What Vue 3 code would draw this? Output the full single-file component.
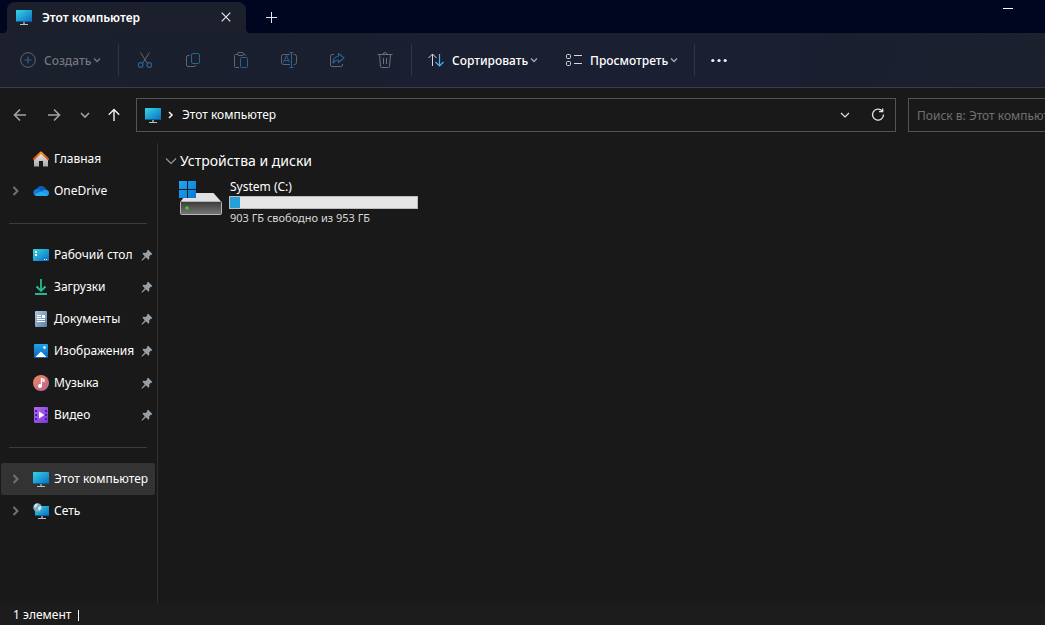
<script setup>
import { ref } from 'vue'

const search = ref('')

const actions = [
  { id: 'cut', label: 'Вырезать' },
  { id: 'copy', label: 'Копировать' },
  { id: 'paste', label: 'Вставить' },
  { id: 'rename', label: 'Переименовать' },
  { id: 'share', label: 'Поделиться' },
  { id: 'trash', label: 'Удалить' }
]

const groups = [
  [
    { icon: 'home', label: 'Главная' },
    { icon: 'cloud', label: 'OneDrive', expandable: true }
  ],
  [
    { icon: 'desktop', label: 'Рабочий стол', pinned: true },
    { icon: 'downloads', label: 'Загрузки', pinned: true },
    { icon: 'documents', label: 'Документы', pinned: true },
    { icon: 'pictures', label: 'Изображения', pinned: true },
    { icon: 'music', label: 'Музыка', pinned: true },
    { icon: 'video', label: 'Видео', pinned: true }
  ],
  [
    { icon: 'pc', label: 'Этот компьютер', expandable: true, selected: true },
    { icon: 'network', label: 'Сеть', expandable: true }
  ]
]

const drive = { name: 'System (C:)', free: 903, total: 953 }
const usedShare = ((drive.total - drive.free) / drive.total) * 100
</script>

<template>
  <div class="explorer">
    <svg class="defs" width="0" height="0" aria-hidden="true">
      <defs>
        <linearGradient id="gScreen" x1="0" y1="0" x2="1" y2="1">
          <stop offset="0" stop-color="#35d6e4" /><stop offset="1" stop-color="#0a6cc4" />
        </linearGradient>
        <linearGradient id="gRoof" x1="0" y1="0" x2="0" y2="1">
          <stop offset="0" stop-color="#fb9a1c" /><stop offset="1" stop-color="#d9490c" />
        </linearGradient>
        <linearGradient id="gWall" x1="0" y1="0" x2="0" y2="1">
          <stop offset="0" stop-color="#efefef" /><stop offset="1" stop-color="#a8a8a8" />
        </linearGradient>
        <linearGradient id="gDown" x1="0" y1="0" x2="0" y2="1">
          <stop offset="0" stop-color="#2fd08c" /><stop offset="1" stop-color="#14a39a" />
        </linearGradient>
        <linearGradient id="gDoc" x1="0" y1="0" x2="1" y2="1">
          <stop offset="0" stop-color="#b3c6dc" /><stop offset="1" stop-color="#5c7da3" />
        </linearGradient>
        <linearGradient id="gPic" x1="0" y1="0" x2="0" y2="1">
          <stop offset="0" stop-color="#1fa4e8" /><stop offset="1" stop-color="#0a62bd" />
        </linearGradient>
        <linearGradient id="gMusic" x1="0" y1="0" x2="1" y2="1">
          <stop offset="0" stop-color="#f08a5c" /><stop offset="1" stop-color="#b4619a" />
        </linearGradient>
        <linearGradient id="gVideo" x1="0" y1="0" x2="1" y2="1">
          <stop offset="0" stop-color="#b46cf5" /><stop offset="1" stop-color="#7a35d8" />
        </linearGradient>
        <linearGradient id="gDisk" x1="0" y1="0" x2="0" y2="1">
          <stop offset="0" stop-color="#3a3a3a" /><stop offset="1" stop-color="#777777" />
        </linearGradient>
        <linearGradient id="gWin" x1="0" y1="0" x2="1" y2="1">
          <stop offset="0" stop-color="#22a8ee" /><stop offset="1" stop-color="#0878d4" />
        </linearGradient>
      </defs>

      <symbol id="pc" viewBox="0 0 16 16">
        <rect x="0" y="1" width="16" height="12" rx=".5" fill="url(#gScreen)" />
        <path d="M0 12.500h16" stroke="#0c5f9c" />
        <path d="M7 13h2v2H7z" fill="#7f8c96" /><path d="M4 15h8v1H4z" fill="#b8c0c6" />
      </symbol>
      <symbol id="home" viewBox="0 0 16 16">
        <path d="M1 7.200 8 1l7 6.200V15.500H10V10H6v5.500H1z" fill="url(#gWall)" />
        <path d="M.9 8.100 8 1.400l7.100 6.700" fill="none" stroke="url(#gRoof)" stroke-width="2" stroke-linecap="round" stroke-linejoin="round" />
      </symbol>
      <symbol id="cloud" viewBox="0 0 16 16">
        <path d="M3 7.500C3.600 4.700 5.800 3 8.200 3c2.300 0 4.200 1.300 4.900 3.600L9 9z" fill="#0b5fb8" />
        <path d="M4 13a4 3.600 0 0 1-1-7c1.500-.3 2.800.1 4 .9l5 5.600z" fill="#1179d4" />
        <path d="M3 12.500 11 7a3.600 3.600 0 0 1 1.500-.3A3.200 3.200 0 0 1 16 10a3 3 0 0 1-3 3H4z" fill="#1c98e8" />
        <path d="M1.200 11.600 8 8.600l7 2.800c-.5 1-1.200 1.600-2.200 1.600H4c-1.300 0-2.200-.4-2.800-1.400z" fill="#28a8f0" />
      </symbol>
      <symbol id="desktop" viewBox="0 0 16 16">
        <rect x="0" y="2" width="16" height="12" rx="1" fill="url(#gScreen)" />
        <path d="M2 4h2v2H2zM2 7h2v2H2z" fill="#fff" />
        <path d="M11 12.500h1M13 12.500h1" stroke="#fff" />
      </symbol>
      <symbol id="downloads" viewBox="0 0 16 16">
        <path d="M3.500 7.500 8 12l4.500-4.500" fill="none" stroke="url(#gDown)" stroke-width="1.800" />
        <path d="M8 0v12" stroke="#26bd92" stroke-width="1.800" /><path d="M2 15h12" stroke="#22b890" stroke-width="2" />
      </symbol>
      <symbol id="documents" viewBox="0 0 16 16">
        <rect x="2" y="0" width="12" height="16" rx="1" fill="url(#gDoc)" />
        <path d="M4 4.500h4M4 6.500h4M4 8.500h8M4 10.500h8" stroke="#fff" />
        <path d="M9 4h3v3H9z" fill="#fff" />
      </symbol>
      <symbol id="pictures" viewBox="0 0 16 16">
        <rect x="1" y="1" width="14" height="14" rx="1" fill="url(#gPic)" />
        <path d="m2.500 14 5-5q.5-.5 1 0l5 5z" fill="#fff" /><circle cx="11.500" cy="4.500" r="1.300" fill="#fff" />
      </symbol>
      <symbol id="music" viewBox="0 0 16 16">
        <circle cx="8" cy="8" r="8" fill="url(#gMusic)" />
        <circle cx="7" cy="11" r="2" fill="#fff" /><path d="M8.400 11V3.500l2.600 1v2l-2-.7" fill="none" stroke="#fff" stroke-width="1.200" />
      </symbol>
      <symbol id="video" viewBox="0 0 16 16">
        <rect x="1" y="0" width="14" height="16" rx="1" fill="url(#gVideo)" />
        <path d="M2 3h2v2H2zM2 7h2v2H2zM2 11h2v2H2zM12 3h2v2h-2zM12 7h2v2h-2zM12 11h2v2h-2z" fill="#4b1f96" />
        <path d="m6 4.500 5.500 3.500L6 11.500z" fill="#fff" />
      </symbol>
      <symbol id="network" viewBox="0 0 16 16">
        <rect x="2" y="3" width="14" height="10" fill="url(#gScreen)" />
        <path d="M2 12.500h14" stroke="#0c5f9c" />
        <path d="M8 13h2v2H8z" fill="#7f8c96" /><path d="M5 15h8v1H5z" fill="#b8c0c6" />
        <circle cx="4.500" cy="4.500" r="4.300" fill="#7faac5" />
        <path d="M1 3q2-3 4-2.300L4 3 2 5zM5 4l3-1 .5 2-2 3-1.500-2z" fill="#d5e6ef" />
      </symbol>
      <symbol id="pin" viewBox="0 0 12 12">
        <path d="M7 .6 11.400 5l-.9.8-.7-.1-1.600 1.700.1 2.300-1 1L4.900 8.300 1.500 11.500H.7v-.8L3.800 7.200 1.400 4.800l1-1 2.300.1 1.600-1.600-.1-.7z" fill="#969fa5" />
      </symbol>

      <symbol id="cut" viewBox="0 0 16 16">
        <path d="M3.500 .5 10.500 11.500M12.500 .5 5.500 11.500" fill="none" stroke="#61656e" />
        <circle cx="3.700" cy="13" r="2.300" fill="none" stroke="#27638c" stroke-width="1.200" /><circle cx="12.300" cy="13" r="2.300" fill="none" stroke="#27638c" stroke-width="1.200" />
      </symbol>
      <symbol id="copy" viewBox="0 0 16 16">
        <path d="M4.500 3.500H3A1.500 1.500 0 0 0 1.500 5v8A1.500 1.500 0 0 0 3 14.500h6q1.500 0 1.500-1.500" fill="none" stroke="#61656e" />
        <rect x="6.500" y="1.500" width="8" height="10" rx="1.500" fill="none" stroke="#27638c" />
      </symbol>
      <symbol id="paste" viewBox="0 0 16 16">
        <path d="M5 2.500H2.500q-1 0-1 1v11q0 1 1 1H6M10 2.500h1.500q1 0 1 1V4" fill="none" stroke="#61656e" />
        <rect x="4.500" y=".5" width="6" height="3" rx="1.500" fill="none" stroke="#61656e" />
        <rect x="7.500" y="5.500" width="7" height="10" rx="1" fill="none" stroke="#27638c" />
      </symbol>
      <symbol id="rename" viewBox="0 0 16 16">
        <path d="M9 2.500H2.500q-2 0-2 2v6q0 2 2 2H9M12.500 2.500h1q2 0 2 2v6q0 2-2 2h-1" fill="none" stroke="#61656e" />
        <path d="m2.500 10.500 3-7 3 7M3.500 8.500h4M10.500 .5v15M8.500 .5h4M8.500 15.500h4" fill="none" stroke="#27638c" />
      </symbol>
      <symbol id="share" viewBox="0 0 16 16">
        <path d="M5 2.500H3Q1.500 2.500 1.500 4v9q0 1.500 1.500 1.500h9q1.500 0 1.500-1.500v-1" fill="none" stroke="#61656e" />
        <path d="M9.500 1.500 15 6l-5.500 4.500V8Q6.500 8 4 11q0-6 5.500-7z" fill="none" stroke="#27638c" stroke-width="1.200" stroke-linejoin="round" />
      </symbol>
      <symbol id="trash" viewBox="0 0 16 16">
        <path d="M.5 2.500h15M2.500 2.500l1 12q0 1 1 1h7q1 0 1-1l1-12M6.500 6v6M9.500 6v6M6 2.500q0-2 2-2t2 2" fill="none" stroke="#6c7079" />
      </symbol>
      <symbol id="chev" viewBox="0 0 10 10"><path d="m2 3.500 3 3 3-3" fill="none" stroke="currentColor" stroke-width="1.400" /></symbol>
      <symbol id="chevR" viewBox="0 0 10 10"><path d="M3.500 1 7.500 5l-4 4" fill="none" stroke="currentColor" stroke-width="2" /></symbol>
    </svg>

    <header class="titlebar">
      <div class="tab">
        <svg class="i16"><use href="#pc" /></svg>
        <span class="tab-title">Этот компьютер</span>
        <button class="tab-close" aria-label="Закрыть вкладку">
          <svg width="10" height="10" viewBox="0 0 10 10"><path d="m.7.7 8.600 8.600M9.300.7.7 9.300" stroke="#e8e8ea" stroke-width="1.200" /></svg>
        </button>
      </div>
      <button class="new-tab" aria-label="Новая вкладка">
        <svg width="11" height="11" viewBox="0 0 11 11"><path d="M5.500 0v11M0 5.500h11" stroke="#e8e8ee" /></svg>
      </button>
      <button class="minimize" aria-label="Свернуть">
        <svg width="10" height="1" viewBox="0 0 10 1"><path d="M0 .5h10" stroke="#fff" /></svg>
      </button>
    </header>

    <div class="toolbar">
      <button class="cmd create" disabled>
        <svg class="i16" viewBox="0 0 16 16"><circle cx="8" cy="8" r="7.300" fill="none" stroke="#61656e" /><path d="M8 4.500v7M4.500 8h7" stroke="#27638c" stroke-width="1.200" /></svg>
        <span>Создать</span>
        <svg class="i10"><use href="#chev" /></svg>
      </button>
      <span class="sep"></span>
      <div class="actions">
        <button v-for="a in actions" :key="a.id" class="tool" :aria-label="a.label" disabled>
          <svg class="i16"><use :href="'#' + a.id" /></svg>
        </button>
      </div>
      <span class="sep"></span>
      <button class="cmd sort">
        <svg class="i16" viewBox="0 0 16 16"><path d="M4.500 14V2M.5 6l4-4 4 4" fill="none" stroke="#d6d7da" /><path d="M11.500 2v12M7.500 10l4 4 4-4" fill="none" stroke="#4cb4ee" stroke-width="1.200" /></svg>
        <span>Сортировать</span>
        <svg class="i10"><use href="#chev" /></svg>
      </button>
      <button class="cmd view">
        <svg class="i16" viewBox="0 0 16 16"><rect x=".5" y="2.500" width="4" height="4" rx="1" fill="none" stroke="#d6d7da" /><rect x=".5" y="9.500" width="4" height="4" rx="1" fill="none" stroke="#d6d7da" /><path d="M8 3.500h8M8 11.500h8" stroke="#d6d7da" /></svg>
        <span>Просмотреть</span>
        <svg class="i10"><use href="#chev" /></svg>
      </button>
      <span class="sep"></span>
      <button class="tool" aria-label="Подробнее">
        <svg class="i16" viewBox="0 0 16 16"><g fill="#f0f0f2"><circle cx="1.800" cy="8.500" r="1.600" /><circle cx="8" cy="8.500" r="1.600" /><circle cx="14.200" cy="8.500" r="1.600" /></g></svg>
      </button>
    </div>

    <nav class="navbar">
      <div class="history">
        <button class="nav dim" aria-label="Назад"><svg width="14" height="14" viewBox="0 0 14 14"><path d="M13 7H1.500M7 1.500 1.500 7 7 12.500" /></svg></button>
        <button class="nav dim" aria-label="Вперёд"><svg width="14" height="14" viewBox="0 0 14 14"><path d="M1 7h11.500M7 1.500 12.500 7 7 12.500" /></svg></button>
        <button class="nav dim" aria-label="Последние расположения"><svg width="10" height="10" viewBox="0 0 10 10"><path d="m1 3 4 4 4-4" /></svg></button>
        <button class="nav" aria-label="Вверх"><svg width="12" height="14" viewBox="0 0 12 14"><path d="M6 13V1.500M.8 6.700 6 1.500l5.200 5.200" /></svg></button>
      </div>
      <div class="address">
        <svg class="i16"><use href="#pc" /></svg>
        <svg class="crumb-arrow" width="6" height="8" viewBox="0 0 6 8"><path d="m1 1 3 3-3 3" fill="none" stroke="#f0f0f0" stroke-width="1.600" /></svg>
        <a class="crumb" href="#">Этот компьютер</a>
        <button class="addr-btn" aria-label="Предыдущие расположения"><svg width="10" height="10" viewBox="0 0 10 10"><path d="m1 3 4 4 4-4" fill="none" stroke="#e4e4e4" stroke-width="1.200" /></svg></button>
        <button class="addr-btn" aria-label="Обновить">
          <svg width="14" height="14" viewBox="0 0 14 14"><path d="M11.300 3.200A5.500 5.500 0 1 0 12.500 6.500M11.700.5V3.700H8" fill="none" stroke="#e4e4e4" stroke-width="1.300" /></svg>
        </button>
      </div>
      <input v-model="search" class="search" type="text" placeholder="Поиск в: Этот компьютер" aria-label="Поиск в: Этот компьютер" />
    </nav>

    <div class="body">
      <aside class="sidebar">
        <ul v-for="(g, n) in groups" :key="n" class="group">
          <li v-for="item in g" :key="item.label">
            <a href="#" class="row" :class="{ selected: item.selected }">
              <span class="expander"><svg v-if="item.expandable" class="i10"><use href="#chevR" /></svg></span>
              <svg class="i16"><use :href="'#' + item.icon" /></svg>
              <span class="row-label">{{ item.label }}</span>
              <svg v-if="item.pinned" class="pin"><use href="#pin" /></svg>
            </a>
          </li>
        </ul>
      </aside>
      <main class="content">
        <h2 class="section">
          <button class="section-toggle">
            <svg width="12" height="12" viewBox="0 0 12 12"><path d="m1 3.500 5 5 5-5" fill="none" stroke="#9a9a9a" stroke-width="1.100" /></svg>
            <span>Устройства и диски</span>
          </button>
        </h2>
        <a href="#" class="drive">
          <svg width="44" height="36" viewBox="0 0 44 36">
            <path d="M8.500 13h26L42 21.500H1.500z" fill="#dfe1e5" />
            <rect x="1.500" y="21.500" width="41" height="13" rx="1" fill="url(#gDisk)" stroke="#b5b5b5" />
            <circle cx="8" cy="28" r="1.800" fill="#35d435" />
            <path d="M8 1h1v8h8v1H9v8H8v-8H0V9h8z" fill="#191919" />
            <path d="M0 1h8v8H0zM9 1h8v8H9zM0 10h8v8H0zM9 10h8v8H9z" fill="url(#gWin)" />
          </svg>
          <span class="drive-info">
            <span class="drive-name">{{ drive.name }}</span>
            <span class="meter"><span class="meter-fill" :style="{ width: usedShare + '%' }"></span></span>
            <span class="drive-free">{{ drive.free }} ГБ свободно из {{ drive.total }} ГБ</span>
          </span>
        </a>
      </main>
    </div>

    <footer class="status"><span>1 элемент</span><span class="status-sep"></span></footer>
  </div>
</template>

<style>
body { background: #191919; }
</style>

<style scoped>
.explorer {
  display: flex;
  flex-direction: column;
  min-height: 100vh;
  overflow: hidden;
  background: #191919;
  color: #fff;
  font: 12px/16px "Noto Sans", "Open Sans", sans-serif;
}
.explorer *, .explorer { box-sizing: border-box; }
.defs { position: absolute; }
button {
  display: flex;
  align-items: center;
  padding: 0;
  border: 0;
  background: none;
  color: inherit;
  font: inherit;
}
a { color: inherit; text-decoration: none; }
svg { flex: none; display: block; }
.i16 { width: 16px; height: 16px; }
.i10 { width: 10px; height: 10px; }

.titlebar {
  display: flex;
  height: 33px;
  padding: 2px 32px 0 7px;
  background: #00061f;
}
.tab {
  position: relative;
  display: flex;
  align-items: center;
  width: 239px;
  padding: 0 15px 1px 9px;
  border-radius: 8px 8px 0 0;
  background: #1b202c;
}
.tab::before, .tab::after {
  content: "";
  position: absolute;
  bottom: 0;
  width: 4px;
  height: 4px;
}
.tab::before { right: 100%; background: radial-gradient(circle at 0 0, transparent 4px, #1b202c 4px); }
.tab::after { left: 100%; background: radial-gradient(circle at 100% 0, transparent 4px, #1b202c 4px); }
.tab-title { flex: 1; margin-left: 10px; padding-top: 1px; font-weight: 600; }
.new-tab { margin-left: 20px; }
.minimize { align-self: flex-start; height: 13px; margin-left: auto; }

.toolbar {
  display: flex;
  align-items: center;
  height: 55px;
  padding-left: 11px;
  border-bottom: 1px solid #3c3b3f;
  background: linear-gradient(100deg, #1b202c, #1a1f31 40%, #1a1f31 75%, #1b212d);
  font-weight: 500;
}
.sep { flex: none; width: 1px; height: 32px; margin: 0 6px; background: #32353f; }
.actions { display: flex; gap: 8px; }
.tool { justify-content: center; width: 40px; height: 32px; }
.sep + .tool { width: 36px; }
.cmd { flex: none; height: 32px; padding-left: 10px; }
.cmd span { margin: 0 1px 0 8px; padding-top: 2px; }
.cmd .i10 { color: #a5a7ad; }
.create { width: 101px; padding-left: 9px; color: #73767e; }
.create .i10 { color: #73767e; }
.sort { width: 130px; margin-right: 8px; }
.view { width: 132px; }

.navbar { display: flex; align-items: center; padding: 10px 0 11px; }
.history {
  display: grid;
  grid-template-columns: 34px 34px 28px 30px;
  width: 136px;
  padding-left: 3px;
}
.nav { justify-content: center; height: 24px; }
.nav svg { fill: none; stroke: #f2f2f2; stroke-width: 1.400; }
.dim svg { stroke: #a2a2a2; stroke-width: 1.600; }
.address {
  display: flex;
  flex: 1;
  align-items: center;
  height: 34px;
  padding: 0 10px 0 8px;
  border: 1px solid #535353;
}
.crumb-arrow { margin-left: 7px; }
.crumb { margin: 0 auto 0 8px; }
.addr-btn { justify-content: center; width: 14px; height: 24px; margin-left: 19px; }
.search {
  width: 137px;
  height: 34px;
  margin-left: 12px;
  padding: 0 0 0 8px;
  border: 1px solid #535353;
  border-right: 0;
  border-radius: 0;
  background: #191919;
  color: #fff;
  font: inherit;
}
.search::placeholder { color: #717171; opacity: 1; }

.body { display: flex; flex: 1; }
.sidebar { width: 158px; border-right: 1px solid #303030; }
.group { margin: 0; padding: 0; list-style: none; }
.group + .group::before {
  content: "";
  display: block;
  height: 1px;
  margin: 16px 10px 15px 9px;
  background: #3b3b3b;
}
.row {
  display: flex;
  align-items: center;
  height: 32px;
  margin: 0 2px 0 1px;
  padding: 0 2px 0 9px;
  border-radius: 2px;
}
.selected { background: #333; }
.expander { width: 23px; color: #717171; }
.row-label { margin-left: 5px; white-space: nowrap; }
.pin { width: 12px; height: 12px; margin-left: auto; }

.content { flex: 1; padding: 8px 7px; }
.section { margin: 0; font: inherit; }
.section-toggle { gap: 3px; font-size: 14px; line-height: 20px; }
.drive { display: inline-flex; gap: 6px; margin: 9px 0 0 14px; }
.drive-info { display: flex; flex-direction: column; width: 189px; }
.drive-name { margin: -1px 0 1px 1px; }
.meter { height: 13px; border: 1px solid #bcbcbc; background: #e6e6e6; }
.meter-fill { display: block; height: 100%; background: #26a0da; }
.drive-free { margin: 1px 0 0 1px; color: #d8d8d8; font-size: 11px; white-space: nowrap; }

.status { display: flex; align-items: center; height: 22px; padding: 2px 13px 0; background: #1c1c1c; }
.status-sep { width: 1px; height: 11px; margin-left: 7px; background: #fff; }
</style>
